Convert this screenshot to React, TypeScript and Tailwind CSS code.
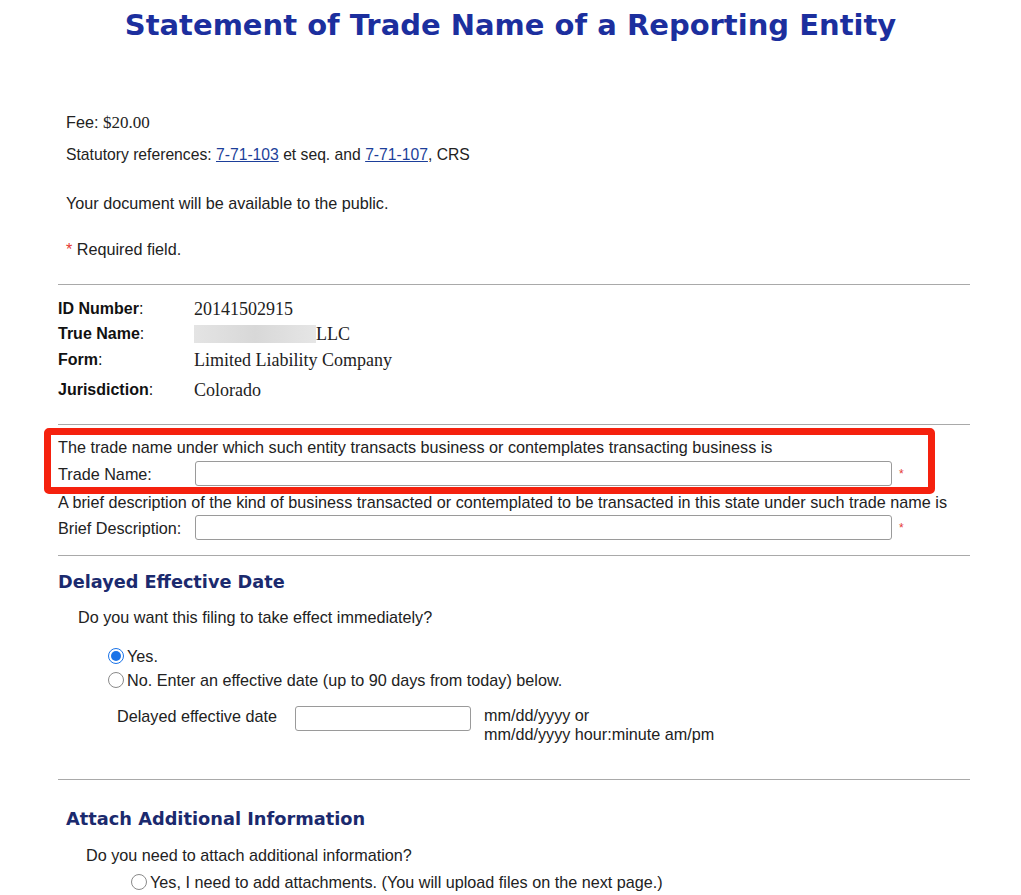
import { useState } from 'react';

const sans = { fontFamily: '"Liberation Sans", Arial, sans-serif' };
const serif = { fontFamily: '"Liberation Serif", "Times New Roman", serif' };
const heading = { fontFamily: '"DejaVu Sans", Verdana, sans-serif' };

function Radio({ checked, onClick }: { checked: boolean; onClick: () => void }) {
  return (
    <span
      onClick={onClick}
      className={`inline-flex h-[16px] w-[16px] shrink-0 items-center justify-center rounded-full border ${
        checked ? 'border-[#1a73e8] bg-white' : 'border-[#8a8a8a] bg-white'
      }`}
    >
      {checked && <span className="h-[10px] w-[10px] rounded-full bg-[#1a73e8]" />}
    </span>
  );
}

export default function App() {
  const [immediate, setImmediate] = useState(true);
  const [attach, setAttach] = useState(false);

  return (
    <div className="min-h-screen w-[1021px] bg-white text-[#222]" style={sans}>
      <h1
        className="pt-[6px] text-center text-[29px] font-bold leading-[38px] text-[#1c2f9e]"
        style={heading}
      >
        Statement of Trade Name of a Reporting Entity
      </h1>

      <div className="pl-[58px] pr-[51px]">
        <div className="pl-[8px] pt-[68px] text-[16.2px]">
          <div className="leading-[20px]">
            Fee: <span style={serif} className="text-[17px]">$20.00</span>
          </div>
          <div className="mt-[12px] leading-[20px] text-[15.7px]">
            Statutory references:{' '}
            <a href="#" className="text-[#1d3f9a] underline">7-71-103</a> et seq. and{' '}
            <a href="#" className="text-[#1d3f9a] underline">7-71-107</a>, CRS
          </div>
          <div className="mt-[28px] leading-[20px]">Your document will be available to the public.</div>
          <div className="mt-[26px] leading-[20px]">
            <span className="text-[#e53935]">*</span> Required field.
          </div>
        </div>

        <hr className="mt-[25px] border-t border-[#a9a9a9]" />

        <div className="mt-[13px] grid grid-cols-[136px_1fr] text-[16px]">
          <div className="font-bold leading-[22px] text-[#111]">
            ID Number<span className="font-normal">:</span>
          </div>
          <div className="text-[18px] leading-[22px]" style={serif}>20141502915</div>
          <div className="mt-[3px] font-bold leading-[22px] text-[#111]">
            True Name<span className="font-normal">:</span>
          </div>
          <div className="mt-[3px] flex items-center text-[18px] leading-[22px]" style={serif}>
            <span className="inline-block h-[18px] w-[122px] bg-gradient-to-r from-[#e4e4e4] via-[#d8d8d8] to-[#e6e6e6]" />
            LLC
          </div>
          <div className="mt-[4px] leading-[22px] text-[#111]">
            <span className="font-bold">Form</span>:
          </div>
          <div className="mt-[4px] text-[18px] leading-[22px]" style={serif}>Limited Liability Company</div>
          <div className="mt-[8px] leading-[22px] text-[#111]">
            <span className="font-bold">Jurisdiction</span>:
          </div>
          <div className="mt-[8px] text-[18px] leading-[22px]" style={serif}>Colorado</div>
        </div>

        <hr className="mt-[23px] border-t border-[#a9a9a9]" />

        <div className="mt-[12px] text-[16.2px]">
          <div className="relative">
            <div className="leading-[20px]">
              The trade name under which such entity transacts business or contemplates transacting business is
            </div>
            <div className="mt-[4px] flex items-center">
              <span className="w-[137px] leading-[20px]">Trade Name:</span>
              <input className="h-[25px] w-[697px] rounded-[3px] border border-[#9a9a9a] bg-white px-1 outline-none" />
              <span className="ml-[7px] text-[12px] text-[#e53935]">*</span>
            </div>
            {/* annotation box */}
            <div className="pointer-events-none absolute -left-[14px] -top-[9px] -bottom-[8px] right-[35px] rounded-[5px] border-[7px] border-[#f5210e]" />
          </div>
          <div className="mt-[6px] leading-[20px]">
            A brief description of the kind of business transacted or contemplated to be transacted in this state under such trade name is
          </div>
          <div className="mt-[3px] flex items-center">
            <span className="w-[137px] leading-[20px]">Brief Description:</span>
            <input className="h-[25px] w-[697px] rounded-[3px] border border-[#9a9a9a] bg-white px-1 outline-none" />
            <span className="ml-[7px] text-[12px] text-[#e53935]">*</span>
          </div>
        </div>

        <hr className="mt-[15px] border-t border-[#a9a9a9]" />

        <h2 className="mt-[14px] text-[17.7px] font-bold leading-[24px] text-[#1b2a6e]" style={heading}>
          Delayed Effective Date
        </h2>
        <div className="mt-[13px] pl-[20px] text-[16.2px] leading-[20px]">Do you want this filing to take effect immediately?</div>
        <div className="mt-[18px] pl-[50px] text-[16.2px]">
          <label className="flex items-center gap-[3px] leading-[22px]">
            <Radio checked={immediate} onClick={() => setImmediate(true)} />
            Yes.
          </label>
          <label className="mt-[2px] flex items-center gap-[3px] leading-[22px]">
            <Radio checked={!immediate} onClick={() => setImmediate(false)} />
            No. Enter an effective date (up to 90 days from today) below.
          </label>
        </div>
        <div className="mt-[15px] flex items-start pl-[59px] text-[16.2px]">
          <span className="w-[178px] leading-[20px]">Delayed effective date</span>
          <input className="h-[25px] w-[176px] rounded-[3px] border border-[#9a9a9a] bg-white px-1 outline-none" />
          <div className="ml-[13px] leading-[19px]">
            <div>mm/dd/yyyy or</div>
            <div>mm/dd/yyyy hour:minute am/pm</div>
          </div>
        </div>

        <hr className="mt-[35px] border-t border-[#a9a9a9]" />

        <h2 className="ml-[8px] mt-[27px] text-[17.8px] font-bold leading-[24px] text-[#1b2a6e]" style={heading}>
          Attach Additional Information
        </h2>
        <div className="mt-[14px] pl-[28px] text-[16.2px] leading-[20px]">Do you need to attach additional information?</div>
        <label className="mt-[6px] flex items-center gap-[3px] pl-[73px] text-[16.2px] leading-[22px]">
          <Radio checked={attach} onClick={() => setAttach(!attach)} />
          Yes, I need to add attachments. (You will upload files on the next page.)
        </label>
      </div>
    </div>
  );
}
